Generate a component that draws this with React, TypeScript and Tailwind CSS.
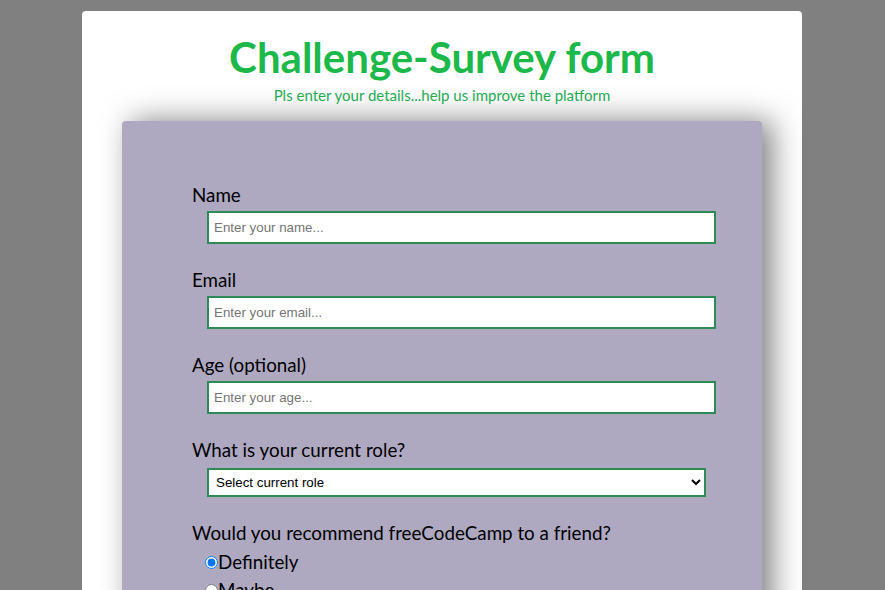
import React from "react";

const labelCls = "block text-[18.8px] leading-[24px] text-black";
const inputCls =
  "block ml-[15px] mt-[4px] w-[509px] h-[33px] border-2 border-[#2e8b57] bg-white px-[5px] font-['Liberation_Sans',Arial,sans-serif] text-[13.33px] text-black placeholder:text-[#757575] outline-none";

export default function App() {
  return (
    <div className="min-h-[590px] bg-[#808080] pt-[11px] font-['Lato','Noto_Sans',sans-serif]">
      <div className="ml-[82px] w-[720px] rounded-[4px] bg-white pt-[22px] pb-[40px]">
        <h1 className="text-center text-[42px] leading-[48px] font-bold text-[#1cb84a]">
          Challenge-Survey form
        </h1>
        <p className="mt-[5px] text-center text-[15px] leading-[18px] text-[#26ab55]">
          Pls enter your details...help us improve the platform
        </p>
        <form className="ml-[40px] mt-[17px] w-[640px] rounded-[4px] bg-[#aea9c0] pl-[70px] pt-[62px] pb-[40px] shadow-[10px_0px_30px_rgba(0,0,0,0.5)]">
          <div>
            <label className={labelCls} htmlFor="name">Name</label>
            <input id="name" type="text" placeholder="Enter your name..." className={inputCls} />
          </div>
          <div className="mt-[24px]">
            <label className={labelCls} htmlFor="email">Email</label>
            <input id="email" type="email" placeholder="Enter your email..." className={inputCls} />
          </div>
          <div className="mt-[24px]">
            <label className={labelCls} htmlFor="age">Age (optional)</label>
            <input id="age" type="number" placeholder="Enter your age..." className={inputCls} />
          </div>
          <div className="mt-[24px]">
            <label className={labelCls} htmlFor="role">What is your current role?</label>
            <select
              id="role"
              defaultValue=""
              className="block ml-[15px] mt-[6px] w-[499px] h-[29px] border-2 border-[#2e8b57] bg-white pl-[3px] font-['Liberation_Sans',Arial,sans-serif] text-[13.33px] text-black outline-none"
            >
              <option value="" disabled>Select current role</option>
              <option>Student</option>
              <option>Full Time Job</option>
              <option>Full Time Learner</option>
              <option>Other</option>
            </select>
          </div>
          <div className="mt-[24px]">
            <p className={labelCls}>Would you recommend freeCodeCamp to a friend?</p>
            <div className="mt-[5px]">
              <label className="flex items-center text-[18.8px] leading-[24px] text-black">
                <input type="radio" name="rec" defaultChecked className="m-0 ml-[13px] h-[13px] w-[13px]" />
                Definitely
              </label>
              <label className="flex items-center text-[18.8px] leading-[24px] text-black mt-[4px]">
                <input type="radio" name="rec" className="m-0 ml-[13px] h-[13px] w-[13px]" />
                Maybe
              </label>
              <label className="flex items-center text-[18.8px] leading-[24px] text-black mt-[4px]">
                <input type="radio" name="rec" className="m-0 ml-[13px] h-[13px] w-[13px]" />
                Not sure
              </label>
            </div>
          </div>
        </form>
      </div>
    </div>
  );
}
